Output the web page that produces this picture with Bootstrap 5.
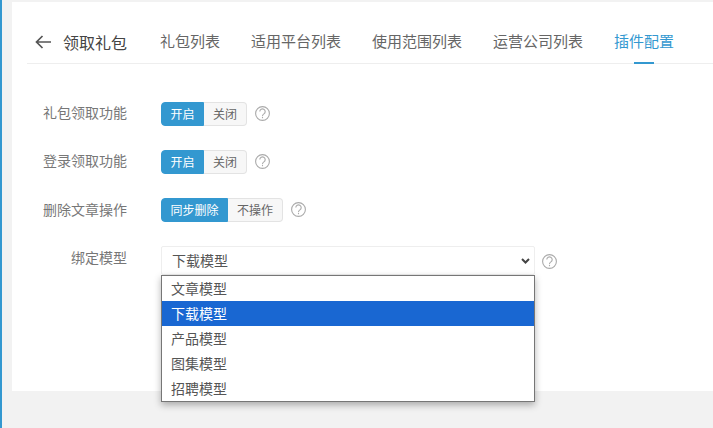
<!DOCTYPE html>
<html lang="zh-CN">
<head>
  <meta charset="UTF-8">
  <title>插件配置</title>
  <link href="https://cdn.jsdelivr.net/npm/bootstrap@5.3.0/dist/css/bootstrap.min.css" rel="stylesheet">
  <style>
    body {
      background-color: #f2f2f2;
      border-left: 2px solid #3398d0;
      font-family: "Liberation Sans", "Noto Sans CJK SC", sans-serif;
      color: #555;
      height: 428px;
      overflow: hidden;
      padding-top: 2px;
    }
    .panel-box {
      background: #fff;
      margin-left: 10px;
      height: 389px;
      padding: 0 0 0 15px;
    }
    .top-bar {
      height: 61px;
      border-bottom: 1px solid #eeeeee;
      box-sizing: content-box;
    }
    .back-link {
      width: 36px;
      padding-left: 8px;
      margin-top: 33px;
      display: flex;
    }
    .page-title {
      font-size: 16px;
      color: #444;
      width: 97px;
      line-height: 22px;
      margin-top: 31px;
    }
    .tab-item {
      font-size: 15px;
      color: #666;
      margin-right: 31px;
      height: 100%;
      padding-top: 29px;
      line-height: 22px;
      position: relative;
      text-decoration: none;
    }
    .tab-item.on {
      color: #3398d0;
    }
    .tab-item.on::after {
      content: "";
      position: absolute;
      left: 20px;
      width: 20px;
      bottom: -1px;
      height: 2px;
      background: #3398d0;
    }
    .form-area {
      padding-top: 38px;
    }
    .set-row {
      height: 48px;
    }
    .set-label {
      width: 100px;
      text-align: right;
      font-size: 14px;
      color: #777;
      line-height: 22px;
      flex: none;
    }
    .set-label.lower {
      padding-top: 1px;
    }
    .set-body {
      margin-left: 34px;
      gap: 8px;
    }
    .sw-btn {
      font-size: 12px;
      line-height: 22px;
      height: 24px;
      padding: 1px 9px 0;
      background: #f7f7f7;
      border: 1px solid #e3e3e3;
      border-left: 0;
      color: #666;
      border-radius: 0 4px 4px 0;
    }
    .sw-btn.on {
      padding: 1px 8.5px 0;
      background: #3398d0;
      border: 1px solid #3398d0;
      color: #fff;
      border-radius: 4px 0 0 4px;
    }
    .help-ico {
      width: 15px;
      height: 15px;
      flex: none;
      margin-top: -2px;
    }
    .help-ico.low {
      margin-top: 8px;
      margin-left: -1px;
    }
    .model-wrap {
      position: relative;
      width: 374px;
    }
    .model-select {
      font-size: 14px;
      height: 29px;
      padding: 2px 10px 0;
      border: 1px solid #eee;
      border-radius: 2px;
      color: #555;
      background-image: url("data:image/svg+xml,%3csvg xmlns='http://www.w3.org/2000/svg' viewBox='0 0 9 6'%3e%3cpath fill='none' stroke='%23444' stroke-width='2' d='M1 1l3.5 3.5L8 1'/%3e%3c/svg%3e");
      background-size: 9px 6px;
      background-position: right 4px center;
    }
    .model-menu {
      position: absolute;
      top: 29px;
      left: 0;
      width: 374px;
      background: #fff;
      border: 1px solid #767676;
      box-shadow: 0 3px 7px rgba(0, 0, 0, .3);
      z-index: 5;
    }
    .model-opt {
      height: 25px;
      line-height: 25px;
      padding: 1px 0 0 9px;
      font-size: 14px;
      color: #555;
    }
    .model-opt.picked {
      background: #1967d2;
      color: #fff;
    }
  </style>
</head>
<body>

<div class="panel-box">
  <div class="top-bar d-flex align-items-start">
    <a class="back-link">
      <svg width="16" height="14" viewBox="0 0 16 14" fill="none" stroke="#555" stroke-width="1.7">
        <path d="M16 7H1.5M7.5 1 1.5 7 7.5 13"/>
      </svg>
    </a>
    <div class="page-title">领取礼包</div>
    <a class="tab-item">礼包列表</a>
    <a class="tab-item">适用平台列表</a>
    <a class="tab-item">使用范围列表</a>
    <a class="tab-item">运营公司列表</a>
    <a class="tab-item on">插件配置</a>
  </div>

  <div class="form-area">
    <div class="set-row d-flex">
      <div class="set-label">礼包领取功能</div>
      <div class="set-body d-flex align-items-center align-self-start">
        <div class="d-flex">
          <button type="button" class="sw-btn on">开启</button>
          <button type="button" class="sw-btn">关闭</button>
        </div>
        <svg class="help-ico" viewBox="0 0 15 15" fill="none" stroke="#aaa" stroke-width="1.1"><circle cx="7.5" cy="7.5" r="6.9"/><path d="M4.8 5.6a2.7 2.7 0 1 1 4.1 2.3c-1 .6-1.4 1-1.4 2.1"/><path d="M7.5 10.8v1.4"/></svg>
      </div>
    </div>
    <div class="set-row d-flex">
      <div class="set-label">登录领取功能</div>
      <div class="set-body d-flex align-items-center align-self-start">
        <div class="d-flex">
          <button type="button" class="sw-btn on">开启</button>
          <button type="button" class="sw-btn">关闭</button>
        </div>
        <svg class="help-ico" viewBox="0 0 15 15" fill="none" stroke="#aaa" stroke-width="1.1"><circle cx="7.5" cy="7.5" r="6.9"/><path d="M4.8 5.6a2.7 2.7 0 1 1 4.1 2.3c-1 .6-1.4 1-1.4 2.1"/><path d="M7.5 10.8v1.4"/></svg>
      </div>
    </div>
    <div class="set-row d-flex">
      <div class="set-label lower">删除文章操作</div>
      <div class="set-body d-flex align-items-center align-self-start">
        <div class="d-flex">
          <button type="button" class="sw-btn on">同步删除</button>
          <button type="button" class="sw-btn">不操作</button>
        </div>
        <svg class="help-ico" viewBox="0 0 15 15" fill="none" stroke="#aaa" stroke-width="1.1"><circle cx="7.5" cy="7.5" r="6.9"/><path d="M4.8 5.6a2.7 2.7 0 1 1 4.1 2.3c-1 .6-1.4 1-1.4 2.1"/><path d="M7.5 10.8v1.4"/></svg>
      </div>
    </div>
    <div class="set-row d-flex">
      <div class="set-label lower">绑定模型</div>
      <div class="set-body d-flex align-items-start">
        <div class="model-wrap">
          <select class="form-select model-select">
            <option>文章模型</option>
            <option selected>下载模型</option>
            <option>产品模型</option>
            <option>图集模型</option>
            <option>招聘模型</option>
          </select>
          <div class="model-menu">
            <div class="model-opt">文章模型</div>
            <div class="model-opt picked">下载模型</div>
            <div class="model-opt">产品模型</div>
            <div class="model-opt">图集模型</div>
            <div class="model-opt">招聘模型</div>
          </div>
        </div>
        <svg class="help-ico low" viewBox="0 0 15 15" fill="none" stroke="#aaa" stroke-width="1.1"><circle cx="7.5" cy="7.5" r="6.9"/><path d="M4.8 5.6a2.7 2.7 0 1 1 4.1 2.3c-1 .6-1.4 1-1.4 2.1"/><path d="M7.5 10.8v1.4"/></svg>
      </div>
    </div>
  </div>
</div>

<script src="https://cdn.jsdelivr.net/npm/bootstrap@5.3.0/dist/js/bootstrap.bundle.min.js"></script>
</body>
</html>
